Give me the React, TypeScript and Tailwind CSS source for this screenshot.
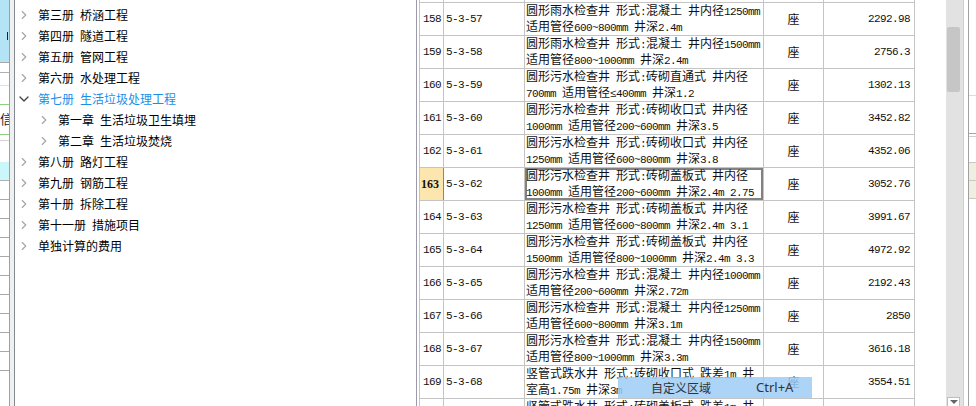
import { ChevronDown, ChevronRight } from "lucide-react";

const CJK = "font-['Noto_Sans_CJK_SC','Noto_Sans',sans-serif]";
const MONO = "font-['Liberation_Mono','DejaVu_Sans_Mono',monospace] text-[11px] tracking-[-0.6px]";

type TreeItem = { label: string; level: 0 | 1; open?: boolean; active?: boolean };

const tree: TreeItem[] = [
  { label: "第三册 桥涵工程", level: 0 },
  { label: "第四册 隧道工程", level: 0 },
  { label: "第五册 管网工程", level: 0 },
  { label: "第六册 水处理工程", level: 0 },
  { label: "第七册 生活垃圾处理工程", level: 0, open: true, active: true },
  { label: "第一章 生活垃圾卫生填埋", level: 1 },
  { label: "第二章 生活垃圾焚烧", level: 1 },
  { label: "第八册 路灯工程", level: 0 },
  { label: "第九册 钢筋工程", level: 0 },
  { label: "第十册 拆除工程", level: 0 },
  { label: "第十一册 措施项目", level: 0 },
  { label: "单独计算的费用", level: 0 },
];

type Row = { n: number; code: string; l1: string; l2: string; amt: string };

const rows: Row[] = [
  { n: 158, code: "5-3-57", l1: "圆形雨水检查井 形式:混凝土 井内径1250mm", l2: "适用管径600~800mm 井深2.4m", amt: "2292.98" },
  { n: 159, code: "5-3-58", l1: "圆形雨水检查井 形式:混凝土 井内径1500mm", l2: "适用管径800~1000mm 井深2.4m", amt: "2756.3" },
  { n: 160, code: "5-3-59", l1: "圆形污水检查井 形式:砖砌直通式 井内径", l2: "700mm 适用管径≤400mm 井深1.2", amt: "1302.13" },
  { n: 161, code: "5-3-60", l1: "圆形污水检查井 形式:砖砌收口式 井内径", l2: "1000mm 适用管径200~600mm 井深3.5", amt: "3452.82" },
  { n: 162, code: "5-3-61", l1: "圆形污水检查井 形式:砖砌收口式 井内径", l2: "1250mm 适用管径600~800mm 井深3.8", amt: "4352.06" },
  { n: 163, code: "5-3-62", l1: "圆形污水检查井 形式:砖砌盖板式 井内径", l2: "1000mm 适用管径200~600mm 井深2.4m 2.75", amt: "3052.76" },
  { n: 164, code: "5-3-63", l1: "圆形污水检查井 形式:砖砌盖板式 井内径", l2: "1250mm 适用管径600~800mm 井深2.4m 3.1", amt: "3991.67" },
  { n: 165, code: "5-3-64", l1: "圆形污水检查井 形式:砖砌盖板式 井内径", l2: "1500mm 适用管径800~1000mm 井深2.4m 3.3", amt: "4972.92" },
  { n: 166, code: "5-3-65", l1: "圆形污水检查井 形式:混凝土 井内径1000mm", l2: "适用管径200~600mm 井深2.72m", amt: "2192.43" },
  { n: 167, code: "5-3-66", l1: "圆形污水检查井 形式:混凝土 井内径1250mm", l2: "适用管径600~800mm 井深3.1m", amt: "2850" },
  { n: 168, code: "5-3-67", l1: "圆形污水检查井 形式:混凝土 井内径1500mm", l2: "适用管径800~1000mm 井深3.3m", amt: "3616.18" },
  { n: 169, code: "5-3-68", l1: "竖管式跌水井 形式:砖砌收口式 跌差1m 井", l2: "室高1.75m 井深3m", amt: "3554.51" },
  { n: 170, code: "5-3-69", l1: "竖管式跌水井 形式:砖砌盖板式 跌差1m 井", l2: "室高1.75m 井深3m", amt: "3498.20" },
];

const SELECTED = 163;

// half-width runs get a 6px-advance mono face, like the grid's bitmap font
function Mixed({ text }: { text: string }) {
  const parts = text.match(/[\x20-\x7e≤]+|[^\x20-\x7e≤]+/g) ?? [];
  return (
    <span className="whitespace-pre">
      {parts.map((p, i) =>
        /^[\x20-\x7e≤]+$/.test(p) ? (
          <span key={i} className={MONO}>
            {p}
          </span>
        ) : (
          <span key={i}>{p}</span>
        )
      )}
    </span>
  );
}

function LeftStrip() {
  return (
    <div className="flex w-[10px] shrink-0 flex-col border-r border-[#a0a0a0] bg-white">
      <div className="relative h-[63px] border-b border-[#a8a8a8] bg-[#b5e3f6]">
        <div className="absolute left-[7px] top-[32px] h-[8px] w-[1px] bg-[#222]" />
      </div>
      <div className="h-[10px] border-b border-[#b0b0b0]" />
      <div className="h-[13px] border-b border-[#e2e2e2]" />
      <div className="h-[19px] border-b border-[#8fcf80]" />
      <div className={`${CJK} h-[30px] overflow-hidden border-b border-[#8fcf80] pt-[6px] text-[13px] leading-[16px] text-[#222]`}>
        信
      </div>
      <div className="h-[6px] border-b border-[#d4d4d4]" />
      <div className="h-[21px]" />
      <div className="h-[19px] border-b border-[#b0b0b0] bg-[#c9f7fa]" />
      {Array.from({ length: 10 }).map((_, i) => (
        <div key={i} className="h-[19px] shrink-0 border-b border-[#a8a8a8]" />
      ))}
    </div>
  );
}

function Tree() {
  return (
    <div className={`${CJK} w-[402px] shrink-0 border-r border-[#9a9aab] bg-white pt-[4px] text-[12px]`}>
      {tree.map((t) => {
        const [a, b] = t.label.split(" ");
        return (
          <div
            key={t.label}
            className={`flex h-[21px] items-center ${t.level === 0 ? "pl-[2px]" : "pl-[22px]"}`}
          >
            <span className="flex w-[14px] justify-center">
              {t.open ? (
                <ChevronDown size={16} strokeWidth={2} className="shrink-0 text-[#444]" />
              ) : (
                <ChevronRight size={14} strokeWidth={2} className="shrink-0 text-[#a6a6a6]" />
              )}
            </span>
            <span className={`ml-[7px] whitespace-nowrap ${t.active ? "text-[#1a8ee9]" : "text-black"}`}>
              {a}
              {b && <span className="ml-[6px]">{b}</span>}
            </span>
          </div>
        );
      })}
    </div>
  );
}

function TableRow({ r }: { r: Row }) {
  const sel = r.n === SELECTED;
  return (
    <div className="flex h-[33px] shrink-0 border-b border-[#c4c4c4] text-[#111]">
      <div
        className={`flex w-[25px] items-center border-l border-r ${
          sel
            ? "border-l-[#c4c4c4] border-r-[#2aa2e6] bg-[#fce6ad] pl-[1px] font-['Liberation_Serif',serif] text-[12px] font-bold"
            : `border-[#c4c4c4] pl-[3px] ${MONO}`
        }`}
      >
        {r.n}
      </div>
      <div className={`flex w-[81px] items-center border-r border-[#c4c4c4] pl-[2px] ${MONO}`}>{r.code}</div>
      <div
        className={`${CJK} flex w-[239px] flex-col justify-center whitespace-nowrap border-r border-[#c4c4c4] pl-[1px] text-[12px] leading-[13px] ${
          sel ? "shadow-[inset_0_0_0_2px_#828282]" : ""
        }`}
      >
        <Mixed text={r.l1} />
        <Mixed text={r.l2} />
      </div>
      <div className={`${CJK} flex w-[60px] items-center justify-center border-r border-[#c4c4c4] text-[12px]`}>座</div>
      <div className={`flex w-[91px] items-center justify-end border-r border-[#c4c4c4] pr-[4px] ${MONO}`}>{r.amt}</div>
    </div>
  );
}

function Table() {
  return (
    <div className="relative w-[529px] shrink-0 overflow-hidden bg-white pl-[2px]">
      <div className="flex w-[496px] flex-col">
        <div className="flex h-[3px] shrink-0 border-b border-[#c4c4c4]">
          <div className="w-[25px] border-l border-r border-[#c4c4c4]" />
          <div className="w-[81px] border-r border-[#c4c4c4]" />
          <div className="w-[239px] border-r border-[#c4c4c4]" />
          <div className="w-[60px] border-r border-[#c4c4c4]" />
          <div className="w-[91px] border-r border-[#c4c4c4]" />
        </div>
        {rows.map((r) => (
          <TableRow key={r.n} r={r} />
        ))}
      </div>
      <div className={`${CJK} absolute left-[201px] top-[377px] flex h-[21px] w-[194px] items-center bg-[rgba(158,204,246,0.85)] text-[#333]`}>
        <span className="ml-[33px] text-[12px]">自定义区域</span>
        <span className="ml-[45px] font-['Noto_Sans',sans-serif] text-[13px]">Ctrl+A</span>
      </div>
    </div>
  );
}

function Scrollbar() {
  return (
    <div className="flex w-[18px] shrink-0 flex-col border-r border-[#cfcfcf] bg-[#e2e2e2]">
      <div className="h-[27px]" />
      <div className="ml-[1px] h-[65px] w-[13px] rounded-[2px] bg-[#c6c6c6]" />
      <div className="flex-1" />
      <div className="ml-[1px] flex h-[9px] w-[13px] justify-center border border-b-0 border-[#bdbdbd] bg-white pt-[2px]">
        <div className="h-0 w-0 border-x-[4px] border-t-[4px] border-x-transparent border-t-[#666]" />
      </div>
    </div>
  );
}

function RightStrip() {
  return (
    <div className="flex w-[7px] shrink-0 flex-col bg-white">
      <div className="h-[96px] border-b border-[#dcdcdc]" />
      <div className="h-[38px] border-b border-[#7cc576]" />
      <div className="h-[3px] border-b border-[#cfcfcf]" />
      <div className="h-[25px]" />
      <div className="h-[19px] border-y border-[#c8c8c8] bg-[#efeee0]" />
      <div className="h-[18px] border-b border-[#c8c8c8] bg-[#efeee0]" />
    </div>
  );
}

export default function App() {
  return (
    <div className="flex h-[406px] w-[976px] overflow-hidden bg-white">
      <LeftStrip />
      <div className="w-[4px] shrink-0 bg-[#f0f0f0]" />
      <div className="w-[1px] shrink-0 bg-[#838a92]" />
      <Tree />
      <Table />
      <Scrollbar />
      <div className="w-[4px] shrink-0 bg-white" />
      <div className="w-[1px] shrink-0 bg-[#a0a0a0]" />
      <RightStrip />
    </div>
  );
}
